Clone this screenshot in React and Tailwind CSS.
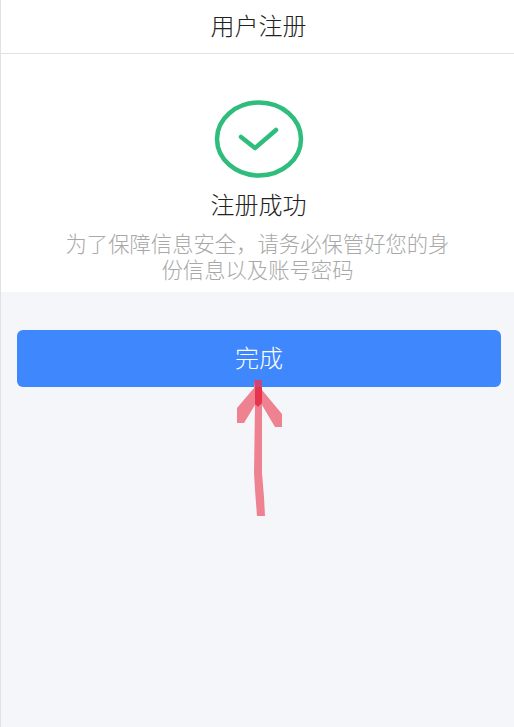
const FONT = 'font-["Noto_Sans_CJK_SC","Noto_Sans",sans-serif]'

function SuccessIcon() {
  return (
    <svg width="90" height="78" viewBox="0 0 90 78" fill="none">
      <ellipse cx="45" cy="39" rx="42" ry="36.5" stroke="#2fbd7c" strokeWidth="4.5" />
      <path d="M27 37 L41 48 L62 30" stroke="#2fbd7c" strokeWidth="4.5" strokeLinecap="round" strokeLinejoin="round" />
    </svg>
  )
}

// hand-drawn arrow scribbled over the screenshot
function Arrow() {
  return (
    <svg className="absolute left-[229px] top-[375px]" width="60" height="145" viewBox="0 0 60 145" fill="none">
      <path d="M24 5 L32 5 L32 15 L52 39 L52 52 L45 52 L32 30 L32 98 L34 122 L35 141 L27 141 L25 115 L24 98 L25 30 L14 48 L7 48 L7 33 L24 13 Z" fill="#ee8291" />
      <path d="M25 12 L32 12 L32 28 L28 32 L25 29 Z" fill="#e8334f" />
      <path d="M24 5 L32 5 L32 12 L25 12 Z" fill="#c9487a" />
    </svg>
  )
}

export default function App() {
  return (
    <div className={`relative flex h-[727px] w-[514px] flex-col overflow-hidden border-l border-[#e2e2e6] bg-[#f4f6fa] font-light ${FONT}`}>
      {/* Header */}
      <div className="flex h-[54px] shrink-0 items-center justify-center border-b border-[#e2e2e2] bg-white pb-1 pl-0.5 text-[24px] text-[#222222]">
        用户注册
      </div>

      {/* Result */}
      <div className="flex h-[238px] shrink-0 flex-col items-center bg-white pt-[46px] pl-0.5">
        <SuccessIcon />
        <div className="mt-[8px] text-[24px] leading-[36px] text-[#222222]">注册成功</div>
        <p className="mt-[8px] mr-0.5 w-[384px] text-center text-[21.33px] leading-[26px] text-[#a8a8a8]">
          为了保障信息安全，请务必保管好您的身份信息以及账号密码
        </p>
      </div>

      <button className="mt-[38px] ml-4 flex h-[57px] w-[484px] shrink-0 items-center justify-center rounded-[6px] bg-[#3e87fd] pb-1 text-[24px] text-white">
        完成
      </button>

      <Arrow />
    </div>
  )
}
